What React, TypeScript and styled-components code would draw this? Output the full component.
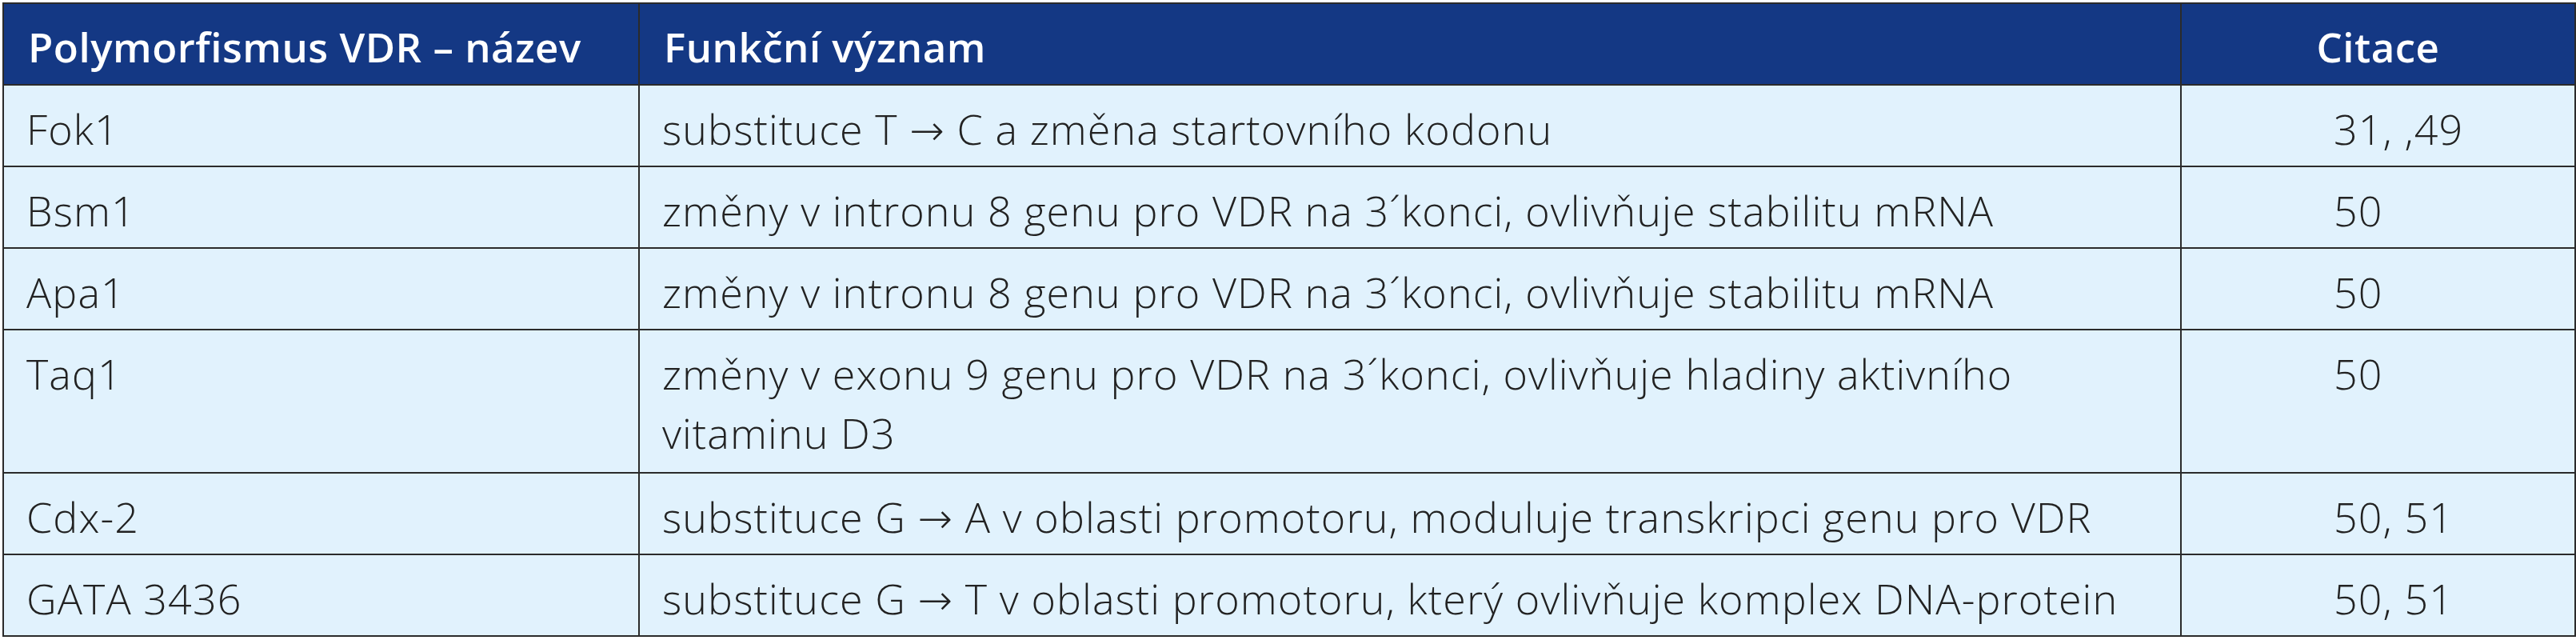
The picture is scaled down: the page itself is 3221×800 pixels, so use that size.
import React from 'react';
import styled, {createGlobalStyle} from 'styled-components';

type Row = {
  name: string;
  meaning: string[];
  citation: string;
};

const rows: Row[] = [
  {name: 'Fok1', meaning: ['substituce T → C a změna startovního kodonu'], citation: '31, ,49'},
  {name: 'Bsm1', meaning: ['změny v intronu 8 genu pro VDR na 3´konci, ovlivňuje stabilitu mRNA'], citation: '50'},
  {name: 'Apa1', meaning: ['změny v intronu 8 genu pro VDR na 3´konci, ovlivňuje stabilitu mRNA'], citation: '50'},
  {
    name: 'Taq1',
    meaning: ['změny v exonu 9 genu pro VDR na 3´konci, ovlivňuje hladiny aktivního', 'vitaminu D3'],
    citation: '50',
  },
  {name: 'Cdx-2', meaning: ['substituce G → A v oblasti promotoru, moduluje transkripci genu pro VDR'], citation: '50, 51'},
  {
    name: 'GATA 3436',
    meaning: ['substituce G → T v oblasti promotoru, který ovlivňuje komplex DNA-protein'],
    citation: '50, 51',
  },
];

const App = () => {
  return (
    <>
      <GlobalStyle />
      <Page>
        <Table>
          <colgroup>
            <col style={{width: 795}} />
            <col style={{width: 1928}} />
            <col style={{width: 493}} />
          </colgroup>
          <thead>
            <tr>
              <HeadCell>Polymorfismus VDR – název</HeadCell>
              <HeadCell>Funkční význam</HeadCell>
              <HeadCell $center>Citace</HeadCell>
            </tr>
          </thead>
          <tbody>
            {rows.map((row) => (
              <tr key={row.name}>
                <Cell $tall={row.meaning.length > 1}>{row.name}</Cell>
                <Cell $tall={row.meaning.length > 1}>
                  {row.meaning.map((line, i) => (
                    <Line key={i}>{line}</Line>
                  ))}
                </Cell>
                <CitationCell $tall={row.meaning.length > 1}>{row.citation}</CitationCell>
              </tr>
            ))}
          </tbody>
        </Table>
      </Page>
    </>
  );
};

export default App;

const GlobalStyle = createGlobalStyle`
  html, body {
    margin: 0;
    padding: 0;
    background: #ffffff;
  }
`;

const Page = styled.div`
  padding: 3px 2px 0 3px;
  font-family: 'Open Sans', 'DejaVu Sans', sans-serif;
`;

const Table = styled.table`
  border-collapse: collapse;
  table-layout: fixed;
  width: 3216px;
  border: 2px solid #2b2b2b;
`;

const HeadCell = styled.th<{$center?: boolean}>`
  background: #143884;
  color: #ffffff;
  font-size: 51px;
  font-weight: 600;
  letter-spacing: 0.5px;
  line-height: 74px;
  text-align: ${(p) => (p.$center ? 'center' : 'left')};
  vertical-align: top;
  padding: 16px 30px 10px;
  border: 2px solid #2b2b2b;
  white-space: nowrap;
`;

const Cell = styled.td<{$tall?: boolean}>`
  background: #e1f2fd;
  color: #222222;
  font-size: 52px;
  font-weight: 300;
  letter-spacing: 1.1px;
  line-height: 74px;
  vertical-align: top;
  padding: 17px 28px ${(p) => (p.$tall ? '12px' : '9px')};
  border: 2px solid #2b2b2b;
  white-space: nowrap;
`;

const CitationCell = styled(Cell)`
  padding-left: 190px;
`;

const Line = styled.div``;
